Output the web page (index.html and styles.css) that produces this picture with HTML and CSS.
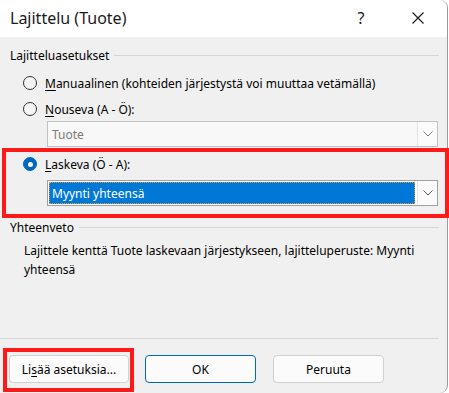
FILE: index.html
```html
<!DOCTYPE html>
<html lang="fi">
<head>
<meta charset="utf-8">
<title>Lajittelu (Tuote)</title>
<link rel="stylesheet" href="styles.css">
</head>
<body>
<div class="window">
  <div class="titlebar">
    <div class="title">Lajittelu (Tuote)</div>
    <div class="tb-help">?</div>
    <div class="tb-close">
      <svg width="16" height="16" viewBox="0 0 16 16"><path d="M2.5 2.5 L13.5 13.5 M13.5 2.5 L2.5 13.5" stroke="#1a1a1a" stroke-width="1.2" fill="none"/></svg>
    </div>
  </div>
  <div class="content">
    <div class="group-head"><span>Lajitteluasetukset</span><div class="rule"></div></div>
    <div class="radio-row r1"><span class="radio"></span><span class="label"><u>M</u>anuaalinen (kohteiden järjestystä voi muuttaa vetämällä)</span></div>
    <div class="radio-row r2"><span class="radio"></span><span class="label"><u>N</u>ouseva (A - Ö):</span></div>
    <div class="combo disabled"><span class="combo-text">Tuote</span><span class="combo-btn"><svg width="10" height="6" viewBox="0 0 10 6"><path d="M0.5 0.5 L5 5 L9.5 0.5" stroke="#7a7a7a" stroke-width="1" fill="none"/></svg></span></div>
    <div class="highlight">
      <div class="radio-row r3"><span class="radio checked"></span><span class="label"><u>L</u>askeva (Ö - A):</span></div>
      <div class="combo active"><span class="combo-text sel">Myynti yhteensä</span><span class="combo-btn"><svg width="10" height="6" viewBox="0 0 10 6"><path d="M0.5 0.5 L5 5 L9.5 0.5" stroke="#555" stroke-width="1" fill="none"/></svg></span></div>
    </div>
    <div class="group-head g2"><span>Yhteenveto</span><div class="rule"></div></div>
    <p class="summary">Lajittele kenttä Tuote laskevaan järjestykseen, lajitteluperuste: Myynti yhteensä</p>
    <div class="spacer"></div>
    <div class="sep"></div>
    <div class="buttons">
      <div class="hl-btn"><button class="btn">Li<u>s</u>ää asetuksia...</button></div>
      <button class="btn default">OK</button>
      <button class="btn">Peruuta</button>
    </div>
  </div>
</div>
</body>
</html>
```
FILE: styles.css
```css
html, body {
  margin: 0;
  padding: 0;
  background: #ffffff;
}
body {
  font-family: "Noto Sans", "Segoe UI", sans-serif;
  font-size: 12px;
  color: #000;
  width: 449px;
  height: 393px;
  overflow: hidden;
}
.window {
  width: 447px;
  height: 393px;
  border-right: 1px solid #9a9a9a;
  border-top-right-radius: 8px;
  border-bottom-right-radius: 8px;
  display: flex;
  flex-direction: column;
  background: #f0f0f0;
}
.titlebar {
  height: 37px;
  flex: none;
  background: #fff;
  border-top-right-radius: 8px;
  display: flex;
  align-items: center;
}
.title {
  flex: 1;
  padding-left: 10px;
  font-size: 16px;
  color: #1a1a1a;
  margin-top: -2px;
}
.tb-help {
  width: 20px;
  font-size: 16px;
  text-align: center;
  color: #1a1a1a;
  margin-right: 39px;
  margin-top: -2px;
}
.tb-close {
  width: 16px;
  height: 16px;
  margin-right: 21px;
  margin-top: -2px;
}
.tb-close svg { display: block; }
.content {
  flex: 1;
  display: flex;
  flex-direction: column;
}
.group-head {
  display: flex;
  align-items: center;
  height: 18px;
  margin-top: 9px;
  padding-left: 10px;
  padding-right: 8px;
}
.group-head span { white-space: nowrap; }
.rule {
  flex: 1;
  height: 1px;
  background: #d6d6d6;
  margin-left: 5px;
}
.radio-row {
  display: flex;
  align-items: center;
  height: 18px;
  padding-left: 23px;
}
.r1 { margin-top: 10px; }
.r2 { margin-top: 8px; }
.radio {
  border: 1px solid #333;
  border-radius: 50%;
  box-sizing: border-box;
  width: 14px;
  height: 14px;
  background: #f5f5f5;
  margin-right: 8px;
  flex: none;
}
.radio.checked {
  background: #0067c0;
  border-color: #0067c0;
  position: relative;
}
.radio.checked::after {
  content: "";
  position: absolute;
  left: 3.5px;
  top: 3.5px;
  width: 5px;
  height: 5px;
  border-radius: 50%;
  background: #fff;
}
.label u, .btn u { text-decoration: underline; text-underline-offset: 2px; }
.combo {
  display: flex;
  align-items: stretch;
  margin-left: 47px;
  width: 391px;
  height: 26px;
  box-sizing: border-box;
  border: 1px solid #c2c2c2;
  background: #f8f8f8;
}
.combo.disabled { margin-top: 3px; color: #7a7a7a; }
.combo-text {
  flex: 1;
  display: flex;
  align-items: center;
  padding-left: 4px;
}
.combo-btn {
  width: 19px;
  border-left: 1px solid #e4e4e4;
  display: flex;
  align-items: center;
  justify-content: center;
  background: #fbfbfb;
}
.combo-btn svg { display: block; }
.highlight {
  margin: 1px 0 0 2px;
  width: 447px;
  height: 70px;
  box-sizing: border-box;
  border: 4px solid #ff1a1a;
  display: flex;
  flex-direction: column;
  flex: none;
}
.highlight .radio-row { padding-left: 17px; margin-top: 3px; }
.highlight .combo {
  margin-left: 41px;
  margin-top: 7px;
  border-color: #a0a0a0;
  background: #fff;
}
.combo-text.sel {
  margin: 1px 0 1px 1px;
  padding-left: 3px;
  background: #0078d7;
  color: #fff;
  outline: 1px dotted #e39a3a;
  outline-offset: -1px;
}
.combo.active .combo-btn { margin-left: 2px; }
.g2 { margin-top: 0; }
.summary {
  margin: 5px 0 0 24px;
  width: 400px;
  line-height: 19px;
}
.spacer { flex: 1; }
.sep {
  height: 1px;
  background: #d6d6d6;
  margin-right: 8px;
  flex: none;
}
.buttons {
  display: flex;
  align-items: flex-start;
  height: 54px;
  flex: none;
  padding-left: 9px;
  gap: 16px;
}
.buttons > .btn { margin-top: 16px; }
.hl-btn {
  margin-left: -6px;
  margin-top: 9px;
  margin-right: -5px;
  border: 4px solid #ff1a1a;
  padding: 3px 1px 5px 2px;
}
.btn {
  font: inherit;
  width: 111px;
  height: 28px;
  border: 1px solid #d0d0d0;
  border-radius: 4px;
  background: #fbfbfb;
  color: #000;
  padding: 0;
  display: block;
}
.hl-btn .btn { width: 120px; }
.buttons > .btn.default + .btn { margin-left: 1px; }
.btn.default {
  border-color: #0067c0;
}
```
